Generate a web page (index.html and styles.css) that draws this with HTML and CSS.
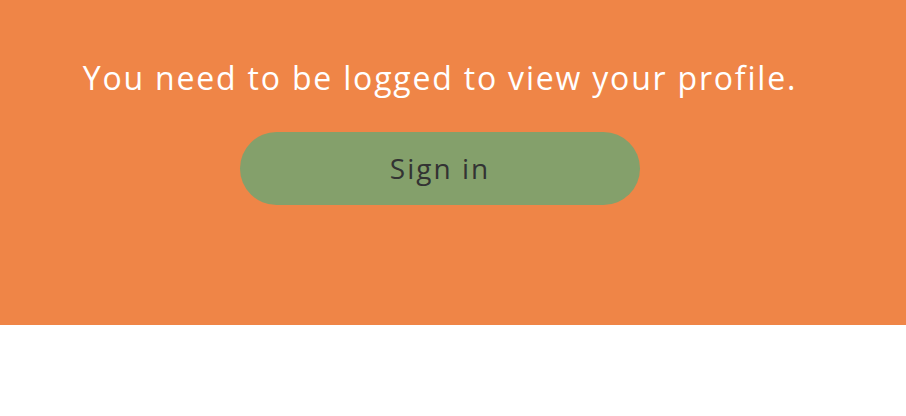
FILE: index.html
```html
<!DOCTYPE html>
<html lang="en">
<head>
<meta charset="utf-8">
<title>Profile</title>
<link rel="stylesheet" href="styles.css">
</head>
<body>
<main class="hero">
  <section class="notice">
    <p class="notice-text">You need to be logged to view your profile.</p>
    <button class="signin" type="button">Sign in</button>
  </section>
</main>
</body>
</html>
```
FILE: styles.css
```css
html, body {
  margin: 0;
  padding: 0;
  background: #ffffff;
}
body {
  font-family: "Open Sans", "DejaVu Sans", sans-serif;
}
.hero {
  background: #ef8547;
  height: 325px;
}
.notice {
  width: 880px;
  display: flex;
  flex-direction: column;
  align-items: center;
  padding-top: 56px;
}
.notice-text {
  margin: 0;
  color: #ffffff;
  font-size: 32px;
  line-height: 44px;
  letter-spacing: 1.8px;
  white-space: nowrap;
}
.signin {
  margin-top: 32px;
  width: 400px;
  height: 73px;
  border: none;
  border-radius: 37px;
  background: #84a06b;
  color: #333333;
  font-family: "Open Sans", "DejaVu Sans", sans-serif;
  font-size: 28px;
  letter-spacing: 2px;
  padding: 0 0 2px 0;
}
```
